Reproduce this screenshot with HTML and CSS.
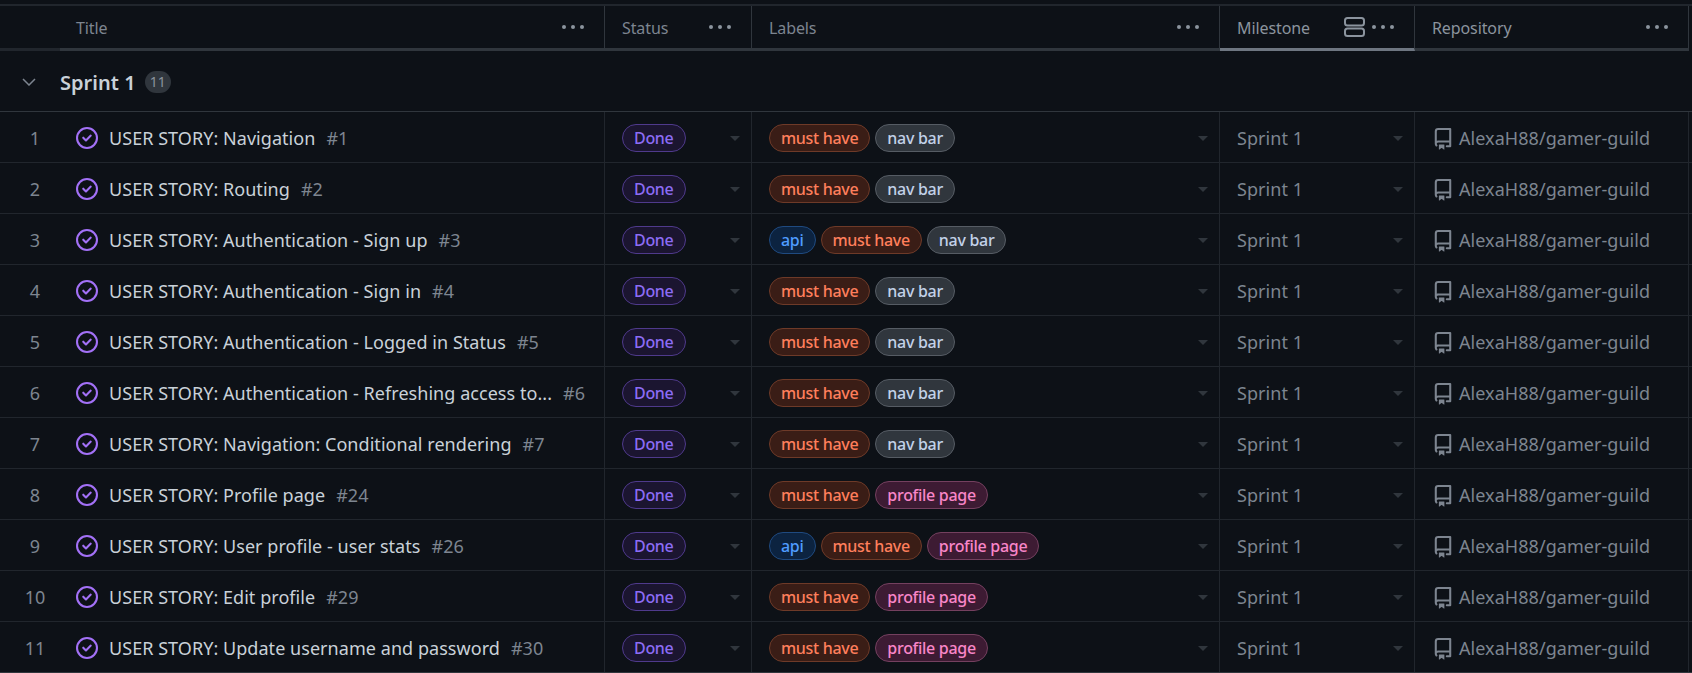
FILE: index.html
```html
<!DOCTYPE html>
<html lang="en">
<head>
    <meta charset="UTF-8">
    <title>Sprint board</title>
    <link rel="stylesheet" href="styles.css">
</head>
<body>
<svg class="defs" width="0" height="0">
    <symbol id="i-closed" viewBox="0 0 16 16"><path d="M11.28 6.78a.75.75 0 0 0-1.06-1.06L7.25 8.69 5.78 7.22a.75.75 0 0 0-1.06 1.06l2 2a.75.75 0 0 0 1.06 0l3.5-3.5Z"/><path d="M16 8A8 8 0 1 1 0 8a8 8 0 0 1 16 0Zm-1.5 0a6.5 6.5 0 1 0-13 0 6.5 6.5 0 0 0 13 0Z"/></symbol>
    <symbol id="i-repo" viewBox="0 0 16 16"><path d="M2 2.5A2.5 2.5 0 0 1 4.5 0h8.75a.75.75 0 0 1 .75.75v12.5a.75.75 0 0 1-.75.75h-2.5a.75.75 0 0 1 0-1.5h1.75v-2h-8a1 1 0 0 0-.714 1.7.75.75 0 1 1-1.072 1.05A2.495 2.495 0 0 1 2 11.5Zm10.5-1h-8a1 1 0 0 0-1 1v6.708A2.486 2.486 0 0 1 4.5 9h8ZM5 12.25a.25.25 0 0 1 .25-.25h3.5a.25.25 0 0 1 .25.25v3.25a.25.25 0 0 1-.4.2l-1.45-1.087a.249.249 0 0 0-.3 0L5.4 15.7a.25.25 0 0 1-.4-.2Z"/></symbol>
    <symbol id="i-dots" viewBox="0 0 22 4"><circle cx="2" cy="2" r="2"/><circle cx="11" cy="2" r="2"/><circle cx="20" cy="2" r="2"/></symbol>
</svg>

<div class="board">
    <div class="head">
        <div class="hcell hnum"></div>
        <div class="hcell htitle"><span class="hname">Title</span><svg class="dots"><use href="#i-dots"/></svg></div>
        <div class="hcell"><span class="hname">Status</span><svg class="dots"><use href="#i-dots"/></svg></div>
        <div class="hcell"><span class="hname">Labels</span><svg class="dots"><use href="#i-dots"/></svg></div>
        <div class="hcell hgrouped"><span class="hname">Milestone</span>
            <svg class="group-icon" viewBox="0 0 21 20"><rect x="1" y="1" width="19" height="7.5" rx="2.5"/><rect x="1" y="11.5" width="19" height="7.5" rx="2.5"/></svg>
            <svg class="dots"><use href="#i-dots"/></svg></div>
        <div class="hcell"><span class="hname hrepo">Repository</span><svg class="dots"><use href="#i-dots"/></svg></div>
    </div>

    <div class="group">
        <svg class="chevron" viewBox="0 0 14 8"><path d="M1 1l6 6 6-6"/></svg>
        <span class="group-name">Sprint 1</span>
        <span class="count">11</span>
    </div>

    <div class="row">
        <div class="cell num">1</div>
        <div class="cell title"><svg class="closed"><use href="#i-closed"/></svg><span class="issue">USER STORY: Navigation</span><span class="ref">#1</span></div>
        <div class="cell"><span class="pill done">Done</span><i class="caret"></i></div>
        <div class="cell labels"><span class="pill must">must have</span><span class="pill nav">nav bar</span><i class="caret"></i></div>
        <div class="cell plain">Sprint 1<i class="caret"></i></div>
        <div class="cell repo"><svg class="repo-icon"><use href="#i-repo"/></svg>AlexaH88/gamer-guild</div>
    </div>
    <div class="row">
        <div class="cell num">2</div>
        <div class="cell title"><svg class="closed"><use href="#i-closed"/></svg><span class="issue">USER STORY: Routing</span><span class="ref">#2</span></div>
        <div class="cell"><span class="pill done">Done</span><i class="caret"></i></div>
        <div class="cell labels"><span class="pill must">must have</span><span class="pill nav">nav bar</span><i class="caret"></i></div>
        <div class="cell plain">Sprint 1<i class="caret"></i></div>
        <div class="cell repo"><svg class="repo-icon"><use href="#i-repo"/></svg>AlexaH88/gamer-guild</div>
    </div>
    <div class="row">
        <div class="cell num">3</div>
        <div class="cell title"><svg class="closed"><use href="#i-closed"/></svg><span class="issue">USER STORY: Authentication - Sign up</span><span class="ref">#3</span></div>
        <div class="cell"><span class="pill done">Done</span><i class="caret"></i></div>
        <div class="cell labels"><span class="pill api">api</span><span class="pill must">must have</span><span class="pill nav">nav bar</span><i class="caret"></i></div>
        <div class="cell plain">Sprint 1<i class="caret"></i></div>
        <div class="cell repo"><svg class="repo-icon"><use href="#i-repo"/></svg>AlexaH88/gamer-guild</div>
    </div>
    <div class="row">
        <div class="cell num">4</div>
        <div class="cell title"><svg class="closed"><use href="#i-closed"/></svg><span class="issue">USER STORY: Authentication - Sign in</span><span class="ref">#4</span></div>
        <div class="cell"><span class="pill done">Done</span><i class="caret"></i></div>
        <div class="cell labels"><span class="pill must">must have</span><span class="pill nav">nav bar</span><i class="caret"></i></div>
        <div class="cell plain">Sprint 1<i class="caret"></i></div>
        <div class="cell repo"><svg class="repo-icon"><use href="#i-repo"/></svg>AlexaH88/gamer-guild</div>
    </div>
    <div class="row">
        <div class="cell num">5</div>
        <div class="cell title"><svg class="closed"><use href="#i-closed"/></svg><span class="issue">USER STORY: Authentication - Logged in Status</span><span class="ref">#5</span></div>
        <div class="cell"><span class="pill done">Done</span><i class="caret"></i></div>
        <div class="cell labels"><span class="pill must">must have</span><span class="pill nav">nav bar</span><i class="caret"></i></div>
        <div class="cell plain">Sprint 1<i class="caret"></i></div>
        <div class="cell repo"><svg class="repo-icon"><use href="#i-repo"/></svg>AlexaH88/gamer-guild</div>
    </div>
    <div class="row">
        <div class="cell num">6</div>
        <div class="cell title"><svg class="closed"><use href="#i-closed"/></svg><span class="issue">USER STORY: Authentication - Refreshing access to...</span><span class="ref">#6</span></div>
        <div class="cell"><span class="pill done">Done</span><i class="caret"></i></div>
        <div class="cell labels"><span class="pill must">must have</span><span class="pill nav">nav bar</span><i class="caret"></i></div>
        <div class="cell plain">Sprint 1<i class="caret"></i></div>
        <div class="cell repo"><svg class="repo-icon"><use href="#i-repo"/></svg>AlexaH88/gamer-guild</div>
    </div>
    <div class="row">
        <div class="cell num">7</div>
        <div class="cell title"><svg class="closed"><use href="#i-closed"/></svg><span class="issue">USER STORY: Navigation: Conditional rendering</span><span class="ref">#7</span></div>
        <div class="cell"><span class="pill done">Done</span><i class="caret"></i></div>
        <div class="cell labels"><span class="pill must">must have</span><span class="pill nav">nav bar</span><i class="caret"></i></div>
        <div class="cell plain">Sprint 1<i class="caret"></i></div>
        <div class="cell repo"><svg class="repo-icon"><use href="#i-repo"/></svg>AlexaH88/gamer-guild</div>
    </div>
    <div class="row">
        <div class="cell num">8</div>
        <div class="cell title"><svg class="closed"><use href="#i-closed"/></svg><span class="issue">USER STORY: Profile page</span><span class="ref">#24</span></div>
        <div class="cell"><span class="pill done">Done</span><i class="caret"></i></div>
        <div class="cell labels"><span class="pill must">must have</span><span class="pill profile">profile page</span><i class="caret"></i></div>
        <div class="cell plain">Sprint 1<i class="caret"></i></div>
        <div class="cell repo"><svg class="repo-icon"><use href="#i-repo"/></svg>AlexaH88/gamer-guild</div>
    </div>
    <div class="row">
        <div class="cell num">9</div>
        <div class="cell title"><svg class="closed"><use href="#i-closed"/></svg><span class="issue">USER STORY: User profile - user stats</span><span class="ref">#26</span></div>
        <div class="cell"><span class="pill done">Done</span><i class="caret"></i></div>
        <div class="cell labels"><span class="pill api">api</span><span class="pill must">must have</span><span class="pill profile">profile page</span><i class="caret"></i></div>
        <div class="cell plain">Sprint 1<i class="caret"></i></div>
        <div class="cell repo"><svg class="repo-icon"><use href="#i-repo"/></svg>AlexaH88/gamer-guild</div>
    </div>
    <div class="row">
        <div class="cell num">10</div>
        <div class="cell title"><svg class="closed"><use href="#i-closed"/></svg><span class="issue">USER STORY: Edit profile</span><span class="ref">#29</span></div>
        <div class="cell"><span class="pill done">Done</span><i class="caret"></i></div>
        <div class="cell labels"><span class="pill must">must have</span><span class="pill profile">profile page</span><i class="caret"></i></div>
        <div class="cell plain">Sprint 1<i class="caret"></i></div>
        <div class="cell repo"><svg class="repo-icon"><use href="#i-repo"/></svg>AlexaH88/gamer-guild</div>
    </div>
    <div class="row">
        <div class="cell num">11</div>
        <div class="cell title"><svg class="closed"><use href="#i-closed"/></svg><span class="issue">USER STORY: Update username and password</span><span class="ref">#30</span></div>
        <div class="cell"><span class="pill done">Done</span><i class="caret"></i></div>
        <div class="cell labels"><span class="pill must">must have</span><span class="pill profile">profile page</span><i class="caret"></i></div>
        <div class="cell plain">Sprint 1<i class="caret"></i></div>
        <div class="cell repo"><svg class="repo-icon"><use href="#i-repo"/></svg>AlexaH88/gamer-guild</div>
    </div>
</div>
</body>
</html>
```

FILE: styles.css
```css
html, body {
    margin: 0;
    height: 673px;
    overflow: hidden;
    background: #0d1117;
}

body {
    font-family: "Noto Sans", "Open Sans", sans-serif;
    font-size: 18px;
    letter-spacing: 0.05px;
    color: #c9d1d9;
}

.defs {
    position: absolute;
}

.board {
    padding-top: 4px;
}

/* header */
.head {
    display: grid;
    grid-template-columns: 60px 545px 147px 468px 195px 274px;
    height: 45px;
    border-top: 2px solid #21262d;
}

.hcell {
    display: flex;
    align-items: center;
    justify-content: space-between;
    box-sizing: border-box;
    padding: 0 20px 0 17px;
    border-right: 1px solid #30363d;
    border-bottom: 3px solid #30363d;
    font-size: 16px;
    letter-spacing: -0.1px;
    color: #7d8590;
}

.hname {
    padding-top: 2px;
}

.hnum {
    border-right: none;
    border-bottom-color: #21262d;
}

.htitle {
    padding-left: 16px;
}

.hgrouped {
    border-bottom-color: #6e7681;
    justify-content: flex-start;
}

.hgrouped .hname {
    color: #8b949e;
    flex: 1;
}

.hrepo {
    color: #8b949e;
}

.dots {
    width: 22px;
    height: 4px;
    fill: #8b949e;
}

.group-icon {
    width: 21px;
    height: 20px;
    margin-right: 7px;
    fill: none;
    stroke: #8b949e;
    stroke-width: 2;
}

/* group row */
.group {
    display: flex;
    align-items: center;
    height: 61px;
    box-sizing: border-box;
    padding: 2px 0 0 22px;
    border-bottom: 1px solid #30363d;
}

.chevron {
    width: 14px;
    height: 8px;
    fill: none;
    stroke: #7d8590;
    stroke-width: 1.5;
}

.group-name {
    margin-left: 24px;
    font-size: 20px;
    font-weight: 600;
    color: #c9d1d9;
}

.count {
    margin-left: 9px;
    width: 26px;
    height: 22px;
    border-radius: 11px;
    background: #30363d;
    color: #8b949e;
    font-size: 14px;
    line-height: 22px;
    text-align: center;
}

/* rows */
.row {
    display: grid;
    grid-template-columns: 60px 545px 147px 468px 195px 274px;
    height: 51px;
    box-sizing: border-box;
    border-bottom: 1px solid #21262d;
}

.row:last-child {
    border-bottom-color: #30363d;
}

.cell {
    display: flex;
    align-items: center;
    gap: 5px;
    box-sizing: border-box;
    padding: 2px 11px 0 17px;
    border-right: 1px solid #21262d;
    white-space: nowrap;
}

.num {
    justify-content: center;
    padding: 2px 0 0 10px;
    border-right: none;
    color: #7d8590;
}

.title {
    padding: 2px 0 0 16px;
    gap: 0;
}

.closed {
    flex: none;
    width: 22px;
    height: 22px;
    margin: 0 11px 0 0;
    fill: #a371f7;
}

.ref {
    margin-left: 11px;
    color: #7d8590;
}

.plain {
    color: #7d8590;
}

.repo {
    color: #7d8590;
    gap: 0;
}

.repo-icon {
    flex: none;
    width: 22px;
    height: 22px;
    margin: 2px 5px 0 0;
    fill: #7d8590;
}

.caret {
    margin-left: auto;
    border-left: 5px solid transparent;
    border-right: 5px solid transparent;
    border-top: 5px solid #30363d;
}

.pill {
    box-sizing: border-box;
    height: 28px;
    padding: 0 11px;
    border: 1px solid;
    border-radius: 14px;
    font-size: 16px;
    font-weight: 500;
    letter-spacing: -0.3px;
    line-height: 26px;
}

.done {
    color: #8c6cf5;
    background: #1b1530;
    border-color: #4f3a8c;
}

.must {
    color: #ff7f5c;
    background: #3a1d16;
    border-color: #6e3a28;
}

.nav {
    color: #c2d1e8;
    background: #30363d;
    border-color: #565c64;
}

.api {
    color: #4f9cff;
    background: #0c2340;
    border-color: #1f4a80;
}

.profile {
    color: #f986c8;
    background: #3d1b33;
    border-color: #74405f;
}
```
